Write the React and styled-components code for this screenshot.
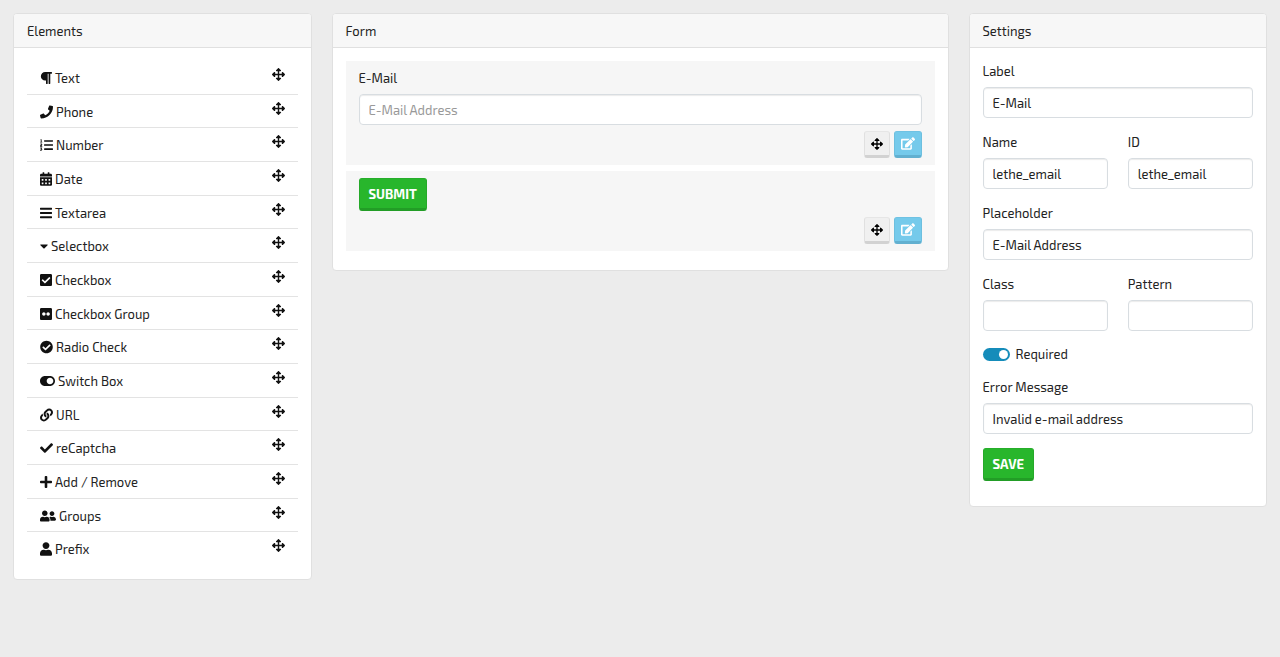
import { useState } from 'react';
import styled, { createGlobalStyle } from 'styled-components';
import {
  FaArrowsAlt,
  FaBars,
  FaCalendarAlt,
  FaCaretDown,
  FaCheck,
  FaCheckCircle,
  FaCheckSquare,
  FaEdit,
  FaFlickr,
  FaLink,
  FaListOl,
  FaParagraph,
  FaPhone,
  FaPlus,
  FaToggleOn,
  FaUser,
  FaUserFriends,
} from 'react-icons/fa';

const ELEMENTS = [
  { name: 'Text', icon: FaParagraph, width: 12 },
  { name: 'Phone', icon: FaPhone, width: 13 },
  { name: 'Number', icon: FaListOl, width: 13 },
  { name: 'Date', icon: FaCalendarAlt, width: 12 },
  { name: 'Textarea', icon: FaBars, width: 12 },
  { name: 'Selectbox', icon: FaCaretDown, width: 8 },
  { name: 'Checkbox', icon: FaCheckSquare, width: 12 },
  { name: 'Checkbox Group', icon: FaFlickr, width: 12 },
  { name: 'Radio Check', icon: FaCheckCircle, width: 13 },
  { name: 'Switch Box', icon: FaToggleOn, width: 15 },
  { name: 'URL', icon: FaLink, width: 13 },
  { name: 'reCaptcha', icon: FaCheck, width: 13 },
  { name: 'Add / Remove', icon: FaPlus, width: 12 },
  { name: 'Groups', icon: FaUserFriends, width: 16 },
  { name: 'Prefix', icon: FaUser, width: 12 },
];

const Panel = ({ title, children }) => {
  return (
    <Card>
      <CardHeader>{title}</CardHeader>
      <CardBody>{children}</CardBody>
    </Card>
  );
};

const Field = ({ id, label, value, onChange }) => {
  return (
    <FieldWrapper>
      <Label htmlFor={id}>{label}</Label>
      <Input id={id} type="text" value={value} onChange={onChange} />
    </FieldWrapper>
  );
};

const BlockActions = () => {
  return (
    <Actions>
      <MoveBtn type="button" aria-label="Move">
        <FaArrowsAlt />
      </MoveBtn>
      <EditBtn type="button" aria-label="Edit">
        <FaEdit />
      </EditBtn>
    </Actions>
  );
};

const App = () => {
  const [settings, setSettings] = useState({
    label: 'E-Mail',
    name: 'lethe_email',
    id: 'lethe_email',
    placeholder: 'E-Mail Address',
    className: '',
    pattern: '',
    required: true,
    error: 'Invalid e-mail address',
  });

  const onText = (key) => (e) =>
    setSettings({ ...settings, [key]: e.target.value });

  return (
    <>
      <GlobalStyle />
      <Page>
        <Panel title="Elements">
          <ElementList>
            {ELEMENTS.map(({ name, icon: Icon, width }) => (
              <ElementItem key={name}>
                <ElementName $iconWidth={width}>
                  <Icon />
                  {name}
                </ElementName>
                <DragHandle type="button" aria-label={`Drag ${name}`}>
                  <FaArrowsAlt />
                </DragHandle>
              </ElementItem>
            ))}
          </ElementList>
        </Panel>

        <Panel title="Form">
          <Block>
            <Label htmlFor="form-email">E-Mail</Label>
            <Input id="form-email" type="email" placeholder="E-Mail Address" />
            <BlockActions />
          </Block>
          <Block>
            <GreenBtn type="button">SUBMIT</GreenBtn>
            <BlockActions />
          </Block>
        </Panel>

        <Panel title="Settings">
          <SettingsForm onSubmit={(e) => e.preventDefault()}>
            <Field
              id="set-label"
              label="Label"
              value={settings.label}
              onChange={onText('label')}
            />
            <FieldRow>
              <Field
                id="set-name"
                label="Name"
                value={settings.name}
                onChange={onText('name')}
              />
              <Field
                id="set-id"
                label="ID"
                value={settings.id}
                onChange={onText('id')}
              />
            </FieldRow>
            <Field
              id="set-placeholder"
              label="Placeholder"
              value={settings.placeholder}
              onChange={onText('placeholder')}
            />
            <FieldRow>
              <Field
                id="set-class"
                label="Class"
                value={settings.className}
                onChange={onText('className')}
              />
              <Field
                id="set-pattern"
                label="Pattern"
                value={settings.pattern}
                onChange={onText('pattern')}
              />
            </FieldRow>
            <SwitchRow>
              <Switch
                id="set-required"
                type="checkbox"
                checked={settings.required}
                onChange={(e) =>
                  setSettings({ ...settings, required: e.target.checked })
                }
              />
              <SwitchLabel htmlFor="set-required">Required</SwitchLabel>
            </SwitchRow>
            <Field
              id="set-error"
              label="Error Message"
              value={settings.error}
              onChange={onText('error')}
            />
            <GreenBtn type="submit">SAVE</GreenBtn>
          </SettingsForm>
        </Panel>
      </Page>
    </>
  );
};

export default App;

const GlobalStyle = createGlobalStyle`
  * {
    box-sizing: border-box;
  }

  body {
    margin: 0;
    background-color: #ececec;
    color: #222;
    font-family: 'Exo 2', Roboto, sans-serif;
    font-size: 13px;
    line-height: 20px;
  }

  button,
  input {
    font: inherit;
    color: inherit;
  }
`;

const Page = styled.main`
  display: grid;
  grid-template-columns: 1fr 2fr 1fr;
  align-items: start;
  padding: 13px 3px;
`;

const Card = styled.section`
  margin: 0 10px;
  background-color: #fff;
  border: 1px solid #e0e0e0;
  border-radius: 4px;
  overflow: hidden;
`;

const CardHeader = styled.h2`
  margin: 0;
  padding: 7px 13px 6px;
  background-color: #f7f7f7;
  border-bottom: 1px solid #e0e0e0;
  font-size: 13px;
  font-weight: 400;
`;

const CardBody = styled.div`
  padding: 13px;
`;

const ElementList = styled.ul`
  display: grid;
  grid-auto-rows: 1fr;
  min-height: 505px;
  margin: 0;
  padding: 0;
  list-style: none;
`;

const ElementItem = styled.li`
  display: flex;
  justify-content: space-between;
  align-items: flex-start;
  padding: 7px 13px 0;
  border-bottom: 1px solid #e3e3e3;

  &:last-child {
    border-bottom: 0;
  }
`;

const ElementName = styled.span`
  display: flex;
  align-items: center;
  gap: 3px;

  svg {
    width: ${({ $iconWidth }) => $iconWidth}px;
    height: 14px;
    color: #111;
  }
`;

const DragHandle = styled.button`
  display: flex;
  padding: 0;
  border: 0;
  background: none;
  color: #111;
  font-size: 13px;
  cursor: move;
`;

const Block = styled.div`
  display: flex;
  flex-direction: column;
  align-items: flex-start;
  margin-bottom: 6px;
  padding: 7px 13px;
  background-color: #f6f6f6;
`;

const Label = styled.label`
  display: block;
  margin-bottom: 6px;
`;

const Input = styled.input`
  display: block;
  width: 100%;
  height: 31px;
  padding: 0 9px;
  background-color: #fff;
  border: 1px solid #d8dde1;
  border-radius: 4px;
  box-shadow: inset 0 1px 1px rgba(0, 0, 0, 0.08);
  outline: none;

  &::placeholder {
    color: #999;
    opacity: 1;
  }
`;

const Actions = styled.div`
  display: flex;
  align-self: flex-end;
  gap: 4px;
  margin-top: 6px;
`;

const Button = styled.button`
  display: flex;
  justify-content: center;
  align-items: center;
  border-style: solid;
  border-width: 1px 1px 3px;
  border-radius: 3px;
  cursor: pointer;
`;

const MoveBtn = styled(Button)`
  width: 26px;
  height: 27px;
  padding: 0;
  background-color: #f0f0f0;
  border-color: #e6e6e6 #e0e0e0 #d2d2d2;
  color: #000;
  font-size: 12px;
  cursor: move;
`;

const EditBtn = styled(Button)`
  width: 28px;
  height: 27px;
  padding: 0;
  background-color: #75caeb;
  border-color: #6fc2e3 #6cbfdf #62b0d0;
  color: #fff;

  svg {
    width: 14px;
    height: 13px;
  }
`;

const GreenBtn = styled(Button)`
  height: 33px;
  padding: 0 9px;
  background-color: #28b62c;
  border-color: #26ae2a #25a929 #229d26;
  color: #fff;
  font-size: 13px;
  font-weight: 700;
`;

const SettingsForm = styled.form`
  padding-bottom: 12px;
`;

const FieldWrapper = styled.div`
  min-width: 0;
  margin-bottom: 14px;
`;

const FieldRow = styled.div`
  display: grid;
  grid-template-columns: 1fr 1fr;
  gap: 20px;
`;

const SwitchRow = styled.div`
  display: flex;
  align-items: center;
  gap: 6px;
  margin-bottom: 14px;
  line-height: 18px;
`;

const Switch = styled.input`
  display: flex;
  align-items: center;
  width: 27px;
  height: 13px;
  margin: 0;
  padding: 2px;
  appearance: none;
  background-color: ${({ checked }) => (checked ? '#158cba' : '#adb5bd')};
  border-radius: 7px;
  cursor: pointer;

  &::before {
    content: '';
    width: 9px;
    height: 9px;
    margin-left: ${({ checked }) => (checked ? 'auto' : '0')};
    background-color: #fff;
    border-radius: 50%;
  }
`;

const SwitchLabel = styled.label`
  cursor: pointer;
`;
